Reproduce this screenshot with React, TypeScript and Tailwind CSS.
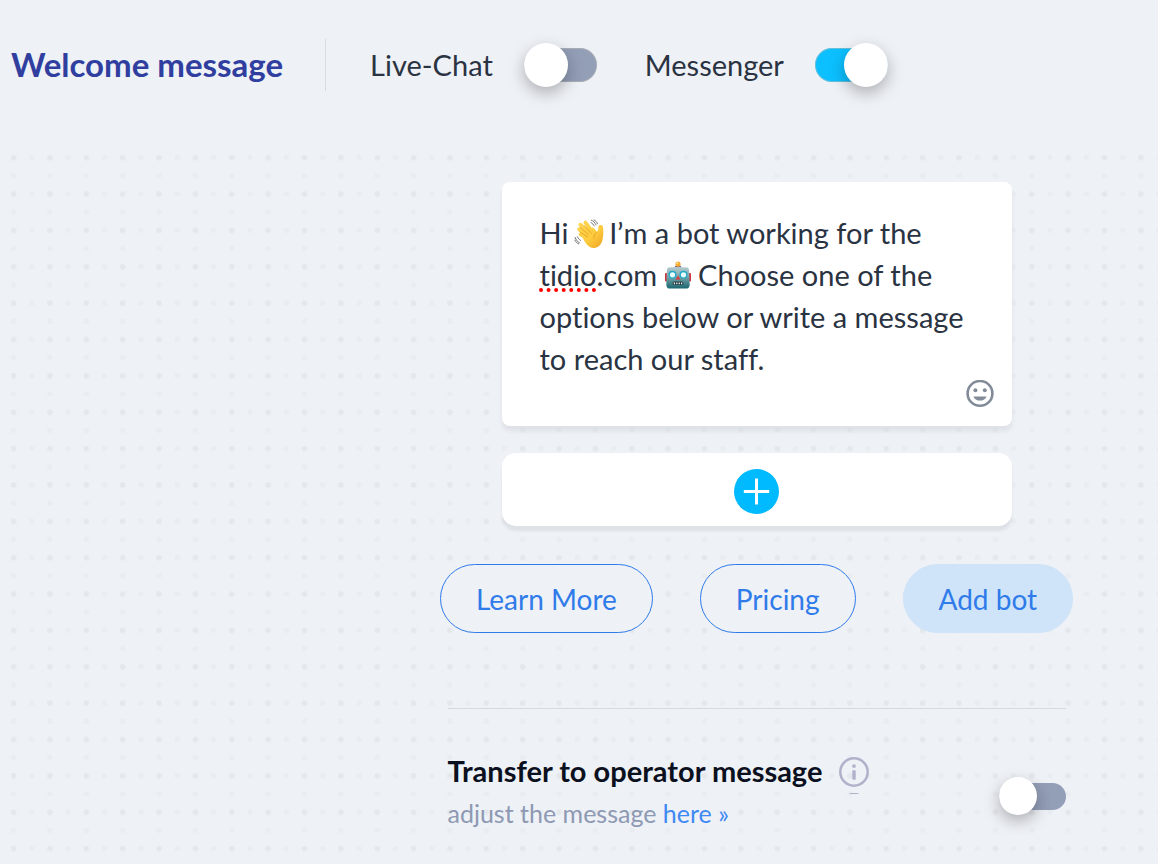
import { useState } from "react";
import clsx from "clsx";

const DOT_STEP = 400 / 11;

function DotGrid() {
  const half = DOT_STEP / 2;
  return (
    <svg className="absolute inset-0 size-full" aria-hidden="true">
      <defs>
        <pattern id="dots" x="-6" y="-6" width={DOT_STEP} height={DOT_STEP} patternUnits="userSpaceOnUse">
          <circle cx="8.6" cy="8.7" r="2.8" fill="#e4e7ec" />
          <circle cx={8.6 + half} cy="8.7" r="2.7" fill="#e9ecf0" />
          <circle cx="8.6" cy={8.7 + half} r="2.7" fill="#e9ecf0" />
        </pattern>
      </defs>
      <rect width="100%" height="100%" fill="url(#dots)" />
    </svg>
  );
}

function WaveEmoji() {
  return (
    <svg viewBox="0 0 30 30" className="-mx-0.5 inline-block size-[30px] align-[-5px]" role="img" aria-label="waving hand">
      <defs>
        <linearGradient id="skin" x1="0" y1="0" x2="30" y2="30" gradientUnits="userSpaceOnUse">
          <stop offset="0" stopColor="#ffd954" />
          <stop offset="0.6" stopColor="#fdcb3e" />
          <stop offset="1" stopColor="#ee9f20" />
        </linearGradient>
      </defs>
      <g stroke="url(#skin)" strokeLinecap="round" strokeLinejoin="round" fill="none">
        <path d="M15.5 17 5.2 10.4" strokeWidth="3.9" />
        <path d="M17 15.5 6.4 5.8" strokeWidth="3.9" />
        <path d="M19 14 11.4 3.6" strokeWidth="3.9" />
        <path d="M16 20.5 6.4 15.4" strokeWidth="3.6" />
      </g>
      <path
        d="M8 17.5 18.5 8.2c1.8 1.4 3.3 2.9 4.6 4.7 1.2-1.4 1.4-3.1 1.3-5.1.1-2.3 4-2.5 4.5.1.8 4.3.4 7.6-.1 11.2-.6 4.8-2.8 9.2-8.4 9.8-5 .5-8.6-3.5-12.4-11.4Z"
        fill="url(#skin)"
      />
      <g stroke="#df9a1d" strokeWidth="0.8" strokeLinecap="round" fill="none">
        <path d="m6.2 8.4 8 6.8M10.4 6.8l6.9 7.4M6 13l7.6 4.9M23 13c-2.2 1.7-3.4 3.5-3.3 6" />
      </g>
      <g stroke="#66696d" strokeWidth="0.9" strokeLinecap="round" fill="none">
        <path d="M17.4 1.2c2 .8 3.5 2.3 4.6 4.6M20 .9c1.7.8 2.8 2 3.5 3.9M17 3.6c1.5.7 2.4 1.8 3.2 3.3M1.1 18.4c.8 2.5 2.2 4.3 4.4 5.4M.8 21.1c.9 1.8 2 2.9 3.8 3.8M3.4 17.8c.7 1.7 1.7 2.8 3.2 3.6" />
      </g>
    </svg>
  );
}

function RobotEmoji() {
  return (
    <svg viewBox="0 0 28 29" className="-mx-px inline-block h-[29px] w-[28px] align-[-4px]" role="img" aria-label="robot">
      <defs>
        <linearGradient id="metal" x1="0" y1="0" x2="0" y2="1">
          <stop offset="0" stopColor="#b5cdd0" />
          <stop offset="0.45" stopColor="#79a5aa" />
          <stop offset="1" stopColor="#19666f" />
        </linearGradient>
      </defs>
      <path d="M10.5 6.5c0-2.7 7-2.7 7 0Z" fill="#5b478d" />
      <circle cx="14" cy="3.2" r="2.6" fill="#f4ac35" />
      <circle cx="13.3" cy="2.2" r="1" fill="#ffe08a" />
      <rect x="1" y="12" width="2.6" height="8.5" rx="1" fill="#cf3540" />
      <rect x="24.4" y="12" width="2.6" height="8.5" rx="1" fill="#cf3540" />
      <path
        d="M6 6.2h16c2 0 3 1.2 3.1 3l.6 14.2c.1 2.8-1.5 4.2-4 4.2H6.3c-2.5 0-4.1-1.4-4-4.2l.6-14.2c.1-1.8 1.1-3 3.1-3Z"
        fill="url(#metal)"
      />
      <circle cx="8.5" cy="13.8" r="4" fill="#24a9c6" />
      <circle cx="19.5" cy="13.8" r="4" fill="#24a9c6" />
      <circle cx="8.5" cy="13.8" r="2.6" fill="#e8ffff" />
      <circle cx="19.5" cy="13.8" r="2.6" fill="#e8ffff" />
      <path d="m14 14.5 2.4 4h-4.8Z" fill="#e03a3d" />
      <rect x="8.6" y="20.6" width="10.8" height="3.4" rx="1.5" fill="#263f45" />
      <path d="M9.8 21.4h1.2v1.8H9.8Zm2.4 0h1.2v1.8h-1.2Zm2.4 0h1.2v1.8h-1.2Zm2.4 0h1.2v1.8H17Z" fill="#f3f6f6" />
    </svg>
  );
}

function SmileIcon() {
  return (
    <svg viewBox="0 0 28 28" className="size-7" fill="#828b98" aria-hidden="true">
      <circle cx="14" cy="13.4" r="12.4" fill="none" stroke="#828b98" strokeWidth="2.6" />
      <circle cx="9.4" cy="10.2" r="2" />
      <circle cx="18.8" cy="10.2" r="2" />
      <path d="M7.4 16.4h13.2c-1 2.6-3.5 4.2-6.6 4.2s-5.6-1.6-6.6-4.2Z" />
    </svg>
  );
}

function InfoIcon() {
  return (
    <svg viewBox="0 0 30 38" className="h-[38px] w-[30px]" fill="#b1b1cb" aria-hidden="true">
      <circle cx="15" cy="15" r="13.7" fill="none" stroke="#b1b1cb" strokeWidth="2.5" />
      <rect x="13.3" y="7.6" width="3.4" height="3.2" rx="0.8" />
      <rect x="13.3" y="13.2" width="3.4" height="9.6" rx="0.8" />
      <rect x="10.5" y="36" width="9" height="1" rx="0.5" />
    </svg>
  );
}

type ToggleProps = {
  id: string;
  checked: boolean;
  onChange: (checked: boolean) => void;
  small?: boolean;
};

function Toggle({ id, checked, onChange, small }: ToggleProps) {
  return (
    <input
      id={id}
      type="checkbox"
      role="switch"
      checked={checked}
      onChange={(e) => onChange(e.target.checked)}
      className={clsx(
        "relative shrink-0 cursor-pointer appearance-none rounded-full before:absolute before:rounded-full before:bg-white before:shadow-[0_6px_16px_rgba(0,0,0,0.28)] before:content-['']",
        small
          ? "mb-6 h-[27px] w-[67px] before:-top-[6px] before:size-[38px]"
          : "h-[34px] w-[73px] shadow-[inset_0_0_0_1px_rgba(190,190,180,0.5)] before:-top-[5px] before:size-11",
        checked ? "bg-[#0cc0ff] before:right-0" : "bg-[#939eb7] before:left-0"
      )}
    />
  );
}

export default function App() {
  const [liveChat, setLiveChat] = useState(false);
  const [messenger, setMessenger] = useState(true);
  const [transfer, setTransfer] = useState(false);

  return (
    <div className="flex min-h-screen flex-col bg-[#eef1f6] font-['Lato',sans-serif] text-[#2a3342] [font-variant-ligatures:none]">
      <header className="mb-[25px] flex h-[130px] items-center pl-[11px]">
        <h1 className="text-[33px] font-bold text-[#303f9f]">Welcome message</h1>
        <div className="mr-11 ml-[42px] h-[52px] w-px bg-[#d8dbe0]" />
        <div className="flex items-center gap-12 text-[29px]">
          <div className="flex items-center gap-[31px]">
            <label htmlFor="live-chat">Live-Chat</label>
            <Toggle id="live-chat" checked={liveChat} onChange={setLiveChat} />
          </div>
          <div className="flex items-center gap-[31px]">
            <label htmlFor="messenger">Messenger</label>
            <Toggle id="messenger" checked={messenger} onChange={setMessenger} />
          </div>
        </div>
      </header>

      <main className="relative ml-[11px] grow">
        <DotGrid />
        <div className="relative flex flex-col items-center pt-[27px] pl-[344px]">
          <div className="w-full max-w-[510px] rounded-lg bg-white pt-[30px] pr-[18px] pb-[18px] pl-[38px] shadow-[0_5px_4px_rgba(40,50,70,0.08)]">
            <div
              role="textbox"
              aria-label="Welcome message text"
              contentEditable
              suppressContentEditableWarning
              spellCheck={false}
              className="text-[29px] leading-[42px] outline-none"
            >
              Hi <WaveEmoji /> I’m a bot working for the{" "}
              <span className="underline decoration-[#f00] decoration-dotted decoration-4 underline-offset-2 [text-decoration-skip-ink:none]">
                tidio
              </span>
              .com <RobotEmoji /> Choose one of the options below or write a message to reach our staff.
            </div>
            <div className="flex justify-end">
              <button type="button" aria-label="Insert emoji">
                <SmileIcon />
              </button>
            </div>
          </div>

          <div className="mt-[27px] flex h-[73px] w-full max-w-[510px] items-center justify-center rounded-[14px] bg-white pt-[3px] shadow-[0_5px_3px_rgba(40,50,70,0.08)]">
            <button type="button" aria-label="Add block" className="rounded-full bg-[#00baff]">
              <svg viewBox="0 0 45 45" className="size-[45px]" stroke="#fff" strokeWidth="3" aria-hidden="true">
                <path d="M22.5 9.5v26M9.8 22.5h25.4" />
              </svg>
            </button>
          </div>

          <div className="mt-[38px] flex gap-[47px] text-[28px] text-[#2f7bea]">
            <button type="button" className="h-[69px] rounded-full border border-[#2f7bea] bg-[#eef1f6] px-[35px]">
              Learn More
            </button>
            <button type="button" className="h-[69px] rounded-full border border-[#2f7bea] bg-[#eef1f6] px-[35px]">
              Pricing
            </button>
            <button type="button" className="h-[69px] rounded-full border border-[#cfe4f9] bg-[#cfe4f9] px-[35px]">
              Add bot
            </button>
          </div>

          <div className="mt-[75px] flex w-full max-w-[618px] items-end justify-between border-t border-[#d5d9e0] pt-[41px]">
            <div>
              <div className="flex h-[42px] items-start gap-[17px]">
                <label htmlFor="transfer" className="text-[29px] leading-[42px] font-bold text-[#0b1020]">
                  Transfer to operator message
                </label>
                <button type="button" aria-label="More info" className="mt-[7px]">
                  <InfoIcon />
                </button>
              </div>
              <p className="text-[25px] leading-[42px] text-[#8d99b3]">
                adjust the message{" "}
                <a href="#transfer" className="text-[#3f89f5]">
                  here »
                </a>
              </p>
            </div>
            <Toggle id="transfer" checked={transfer} onChange={setTransfer} small />
          </div>
        </div>
      </main>
    </div>
  );
}
